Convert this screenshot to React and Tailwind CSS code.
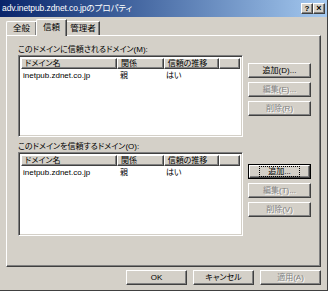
const raised = 'border border-t-white border-l-white border-r-[#404040] border-b-[#404040] shadow-[inset_-1px_-1px_0_#808080]';
const disabled = 'text-[#808080] [text-shadow:1px_1px_0_#fff]';

function Btn({ label, off, def, className = '' }) {
  return (
    <div className={`${def ? 'border border-black' : ''} ${className}`}>
      <div className={`${raised} flex items-center justify-center ${def ? 'h-[13px]' : 'h-[15px]'} ${off ? disabled : 'text-black'}`}>
        {def ? (
          <span className="border border-dotted border-black px-[8px] leading-[9px]">{label}</span>
        ) : (
          <span className="leading-[10px]">{label}</span>
        )}
      </div>
    </div>
  );
}

function DomainGroup({ title, list, h, rows, buttons }) {
  return (
    <div className="flex flex-col">
      <div className="h-[11px] leading-[11px] ml-[11px]">{title}</div>
      <div className="flex">
        <div
          className={`ml-[11px] w-[225px] border border-t-[#808080] border-l-[#808080] border-r-white border-b-white shadow-[inset_1px_1px_0_#404040,inset_-1px_-1px_0_#d4d0c8] bg-white p-[2px] ${h}`}
        >
          <div className="flex h-[11px] bg-[#d4d0c8]">
            {list.map((c) => (
              <div key={c.w} className={`${raised} ${c.w} leading-[9px] pl-[3px] overflow-hidden`}>
                {c.t}
              </div>
            ))}
          </div>
          {rows.map((r) => (
            <div key={r[0]} className="flex h-[12px] items-center mt-[1px]">
              <div className="w-[97px] pl-[2px]">{r[0]}</div>
              <div className="w-[47px] pl-[2px]">{r[1]}</div>
              <div className="w-[56px] pl-[1px]">{r[2]}</div>
            </div>
          ))}
        </div>
        <div className="ml-[5px] w-[63px]">{buttons}</div>
      </div>
    </div>
  );
}

const cols = [
  { t: 'ドメイン名', w: 'w-[97px]' },
  { t: '関係', w: 'w-[47px]' },
  { t: '信頼の推移', w: 'w-[56px]' },
  { t: '', w: 'w-[21px]' },
];

export default function App() {
  return (
    <div className="w-[328px] h-[291px] bg-[#d4d0c8] overflow-hidden flex flex-col border-r border-b border-[#404040] text-[8px] text-black font-['Liberation_Sans','Noto_Sans_CJK_JP',sans-serif] [font-feature-settings:'palt']">
      {/* title bar */}
      <div className="h-[17px] flex items-center bg-gradient-to-r from-[#0a246a] to-[#a6caf0] pl-[2px] pr-[2px]">
        <span className="text-white text-[8.5px] tracking-[-0.1px]">adv.inetpub.zdnet.co.jpのプロパティ</span>
        <div className="ml-auto flex">
          <div className={`${raised} bg-[#d4d0c8] w-[12px] h-[11px] flex items-center justify-center text-[8px] font-bold leading-none`}>?</div>
          <div className={`${raised} bg-[#d4d0c8] w-[12px] h-[11px] flex items-center justify-center text-[9px] font-bold leading-none`}>×</div>
        </div>
      </div>

      {/* tabs */}
      <div className="flex items-end h-[17px] ml-[6px] mt-[1px] relative z-10 text-[8.5px]">
        <div className="w-[31px] h-[14px] border-t border-l border-white border-r border-r-[#404040] shadow-[inset_-1px_0_0_#808080] flex items-center justify-center rounded-tl-[2px]">全般</div>
        <div className="w-[31px] h-[17px] bg-[#d4d0c8] border-t border-l border-white border-r border-r-[#404040] shadow-[inset_-1px_0_0_#808080] flex items-center justify-center rounded-tl-[2px] mb-[-1px] -ml-[1px] pb-[2px]">信頼</div>
        <div className="w-[33px] h-[14px] border-t border-white border-r border-r-[#404040] shadow-[inset_-1px_0_0_#808080] flex items-center justify-center">管理者</div>
      </div>

      {/* panel */}
      <div className="ml-[6px] w-[315px] h-[232px] border border-t-white border-l-white border-r-[#404040] border-b-[#404040] shadow-[inset_-1px_-1px_0_#808080] pt-[8px] flex flex-col">
        <DomainGroup
          title="このドメインに信頼されるドメイン(M):"
          list={cols}
          h="h-[82px]"
          rows={[['inetpub.zdnet.co.jp', '親', 'はい']]}
          buttons={
            <div className="flex flex-col gap-[4px] mt-[8px]">
              <Btn label="追加(D)..." />
              <Btn label="編集(E)..." off />
              <Btn label="削除(R)" off />
            </div>
          }
        />
        <div className="mt-[4px]">
          <DomainGroup
            title="このドメインを信頼するドメイン(O):"
            list={cols}
            h="h-[84px]"
            rows={[['inetpub.zdnet.co.jp', '親', 'はい']]}
            buttons={
              <div className="flex flex-col gap-[4px] mt-[12px]">
                <Btn label="追加..." def />
                <Btn label="編集(T)..." off />
                <Btn label="削除(V)" off />
              </div>
            }
          />
        </div>
      </div>

      {/* bottom buttons */}
      <div className="flex justify-end gap-[6px] mr-[6px] mt-[3px]">
        <Btn label="OK" className="w-[61px]" />
        <Btn label="キャンセル" className="w-[61px]" />
        <Btn label="適用(A)" off className="w-[61px]" />
      </div>
    </div>
  );
}
